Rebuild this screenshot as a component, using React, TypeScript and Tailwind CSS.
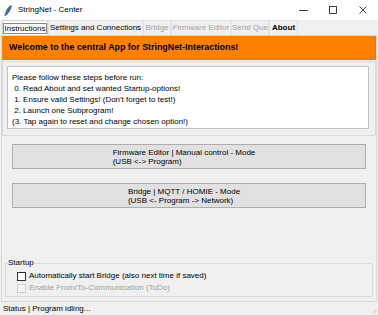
import React from "react";

const tabs = [
  { label: "Instructions", w: "w-[46px]", state: "selected" },
  { label: "Settings and Connections", w: "w-[95px]", state: "normal" },
  { label: "Bridge", w: "w-[28px]", state: "disabled" },
  { label: "Firmware Editor", w: "w-[60px]", state: "disabled" },
  { label: "Send Que", w: "w-[38px]", state: "disabled" },
  { label: "About", w: "w-[29px]", state: "hot" },
];

const steps = [
  "Please follow these steps before run:",
  " 0. Read About and set wanted Startup-options!",
  " 1. Ensure valid Settings! (Don't forget to test!)",
  " 2. Launch one Subprogram!",
  "(3. Tap again to reset and change chosen option!)",
];

function TitleBar() {
  return (
    <div className="h-[20px] bg-white flex items-center shrink-0">
      <svg width="8" height="11" viewBox="0 0 8 11" className="ml-[4px]">
        <path d="M7.5 0.5 C5 1.5 2.5 4 1.5 8.5 L0.8 10.5 L1.8 10.2 C4.5 8 6.8 5 7.5 0.5 Z" fill="#3d6fc0" stroke="#1d3f7a" strokeWidth="0.6" />
      </svg>
      <span className="ml-[6px] text-[8px] text-black">StringNet - Center</span>
      <div className="ml-auto flex items-center h-full">
        <div className="w-[30px] h-full flex items-center justify-center">
          <svg width="9" height="9" viewBox="0 0 9 9">
            <line x1="0" y1="4.5" x2="9" y2="4.5" stroke="#111" strokeWidth="0.8" />
          </svg>
        </div>
        <div className="w-[30px] h-full flex items-center justify-center">
          <svg width="8" height="8" viewBox="0 0 8 8">
            <rect x="0.5" y="0.5" width="7" height="7" fill="none" stroke="#111" strokeWidth="0.8" />
          </svg>
        </div>
        <div className="w-[30px] h-full flex items-center justify-center">
          <svg width="8" height="8" viewBox="0 0 8 8">
            <line x1="0.5" y1="0.5" x2="7.5" y2="7.5" stroke="#111" strokeWidth="0.8" />
            <line x1="7.5" y1="0.5" x2="0.5" y2="7.5" stroke="#111" strokeWidth="0.8" />
          </svg>
        </div>
      </div>
    </div>
  );
}

function Tabs() {
  return (
    <div className="h-[15px] flex items-end pl-[2px] shrink-0">
      {tabs.map((t) => (
        <div
          key={t.label}
          className={
            t.w +
            " h-full flex items-center justify-center whitespace-nowrap text-[8px] border-x border-t " +
            (t.state === "selected"
              ? "bg-white border-[#d0d0d0] text-black"
              : t.state === "disabled"
              ? "bg-[#f0f0f0] border-[#e3e3e3] text-[#a3a3a3]"
              : t.state === "hot"
              ? "bg-[#f0f0f0] border-[#e3e3e3] text-black font-bold"
              : "bg-[#f0f0f0] border-[#e3e3e3] text-black")
          }
        >
          {t.state === "selected" ? (
            <span className="border border-[#8a8a8a] px-[1px] leading-[9px]">{t.label}</span>
          ) : (
            t.label
          )}
        </div>
      ))}
    </div>
  );
}

function ModeButton({ lines }: { lines: string[] }) {
  return (
    <button className="ml-[10px] w-[354px] h-[25px] bg-[#e1e1e1] border border-[#adadad] flex items-center justify-center pr-[10px]">
      <span className="text-left text-[8px] leading-[9px] text-black">
        {lines.map((l) => (
          <span key={l} className="block whitespace-pre">
            {l}
          </span>
        ))}
      </span>
    </button>
  );
}

export default function App() {
  return (
    <div className="w-[378px] h-[315px] bg-[#f0f0f0] flex flex-col overflow-hidden font-['Liberation_Sans',Arial,sans-serif]">
      <TitleBar />
      <Tabs />

      <div className="ml-[1px] w-[376px] h-[267px] border border-[#d9d9d9] flex flex-col shrink-0">
        <div className="h-[24px] bg-[#ff8000] border-r border-b border-[#8c8c8c] flex items-center pl-[7px]">
          <span className="text-[8.9px] font-bold text-black whitespace-nowrap">
            Welcome to the central App for StringNet-Interactions!
          </span>
        </div>

        <div className="mt-[1px] h-[75px] border border-[#dadada] pl-[4px] pt-[4px]">
          <div className="w-[362px] h-[63px] bg-white border border-[#c4c4c4] pl-[4px] pt-[5px]">
            {steps.map((s) => (
              <div key={s} className="text-[8px] leading-[11px] text-black whitespace-pre">
                {s}
              </div>
            ))}
          </div>
        </div>

        <div className="mt-[8px]">
          <ModeButton lines={["Firmware Editor | Manual control - Mode", "(USB <-> Program)"]} />
        </div>
        <div className="mt-[14px]">
          <ModeButton lines={["Bridge | MQTT / HOMIE - Mode", "(USB <- Program -> Network)"]} />
        </div>

        <fieldset className="mt-auto mb-[4px] ml-[3px] w-[368px] h-[39px] border border-[#dcdcdc] pl-[11px]">
          <legend className="ml-[-9px] px-0 text-[8px] leading-[10px] text-black">Startup</legend>
          <div className="flex items-center h-[12px] mt-[2px]">
            <span className="w-[9px] h-[9px] border border-[#333] bg-white" />
            <span className="ml-[3px] text-[8px] text-black whitespace-nowrap">
              Automatically start Bridge (also next time if saved)
            </span>
          </div>
          <div className="flex items-center h-[12px]">
            <span className="w-[9px] h-[9px] border border-[#cfcfcf] bg-[#f7f7f7]" />
            <span className="ml-[3px] text-[8px] text-[#a0a0a0] whitespace-nowrap">
              Enable From/To-Communication (ToDo)
            </span>
          </div>
        </fieldset>
      </div>

      <div className="h-[13px] flex items-center pl-[3px] relative">
        <span className="text-[8px] text-black">Status | Program idling...</span>
        <svg width="5" height="5" viewBox="0 0 5 5" className="absolute right-[1px] bottom-[1px]">
          <rect x="3.5" y="0.5" width="1" height="1" fill="#b0b0b0" />
          <rect x="1.5" y="2.5" width="1" height="1" fill="#b0b0b0" />
          <rect x="3.5" y="2.5" width="1" height="1" fill="#b0b0b0" />
        </svg>
      </div>
    </div>
  );
}
